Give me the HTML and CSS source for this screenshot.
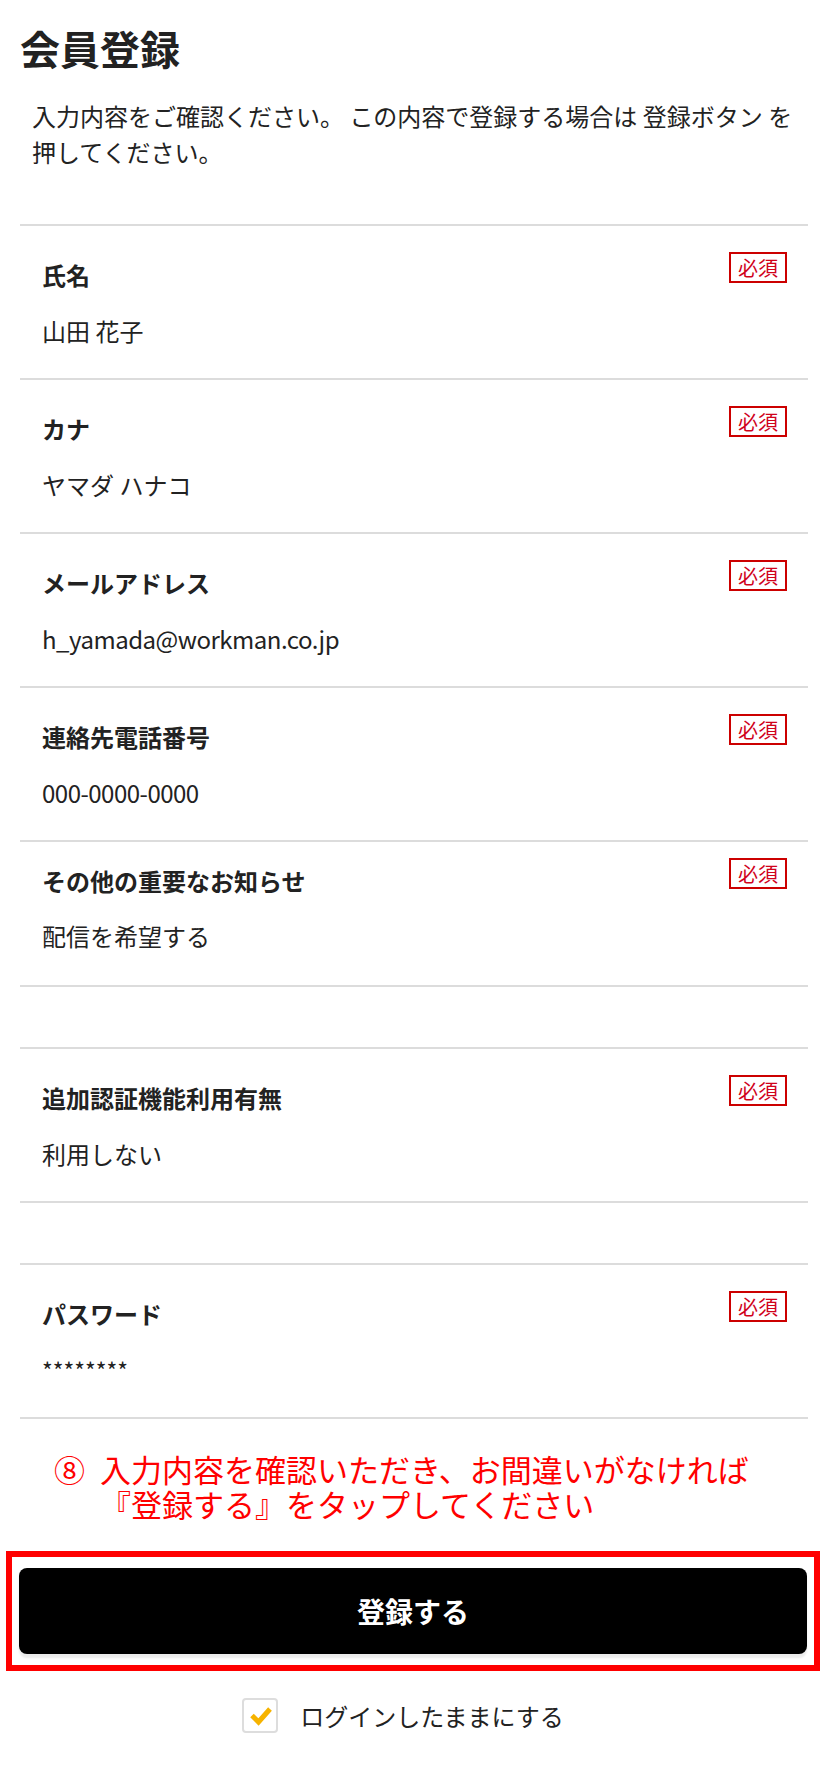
FILE: index.html
```html
<!DOCTYPE html>
<html lang="ja">
<head>
<meta charset="utf-8">
<title>会員登録</title>
<link rel="stylesheet" href="styles.css">
</head>
<body>
<main class="page">
  <h1 class="title">会員登録</h1>
  <p class="lead">入力内容をご確認ください。 この内容で登録する場合は 登録ボタン を<br>押してください。</p>

  <div class="confirm-list">
    <div class="field">
      <div class="field-head"><span class="field-label">氏名</span><span class="badge">必須</span></div>
      <div class="field-value">山田 花子</div>
    </div>
    <div class="field">
      <div class="field-head"><span class="field-label">カナ</span><span class="badge">必須</span></div>
      <div class="field-value">ヤマダ ハナコ</div>
    </div>
    <div class="field">
      <div class="field-head"><span class="field-label">メールアドレス</span><span class="badge">必須</span></div>
      <div class="field-value field-value--latin">h_yamada@workman.co.jp</div>
    </div>
    <div class="field">
      <div class="field-head"><span class="field-label">連絡先電話番号</span><span class="badge">必須</span></div>
      <div class="field-value field-value--latin">000-0000-0000</div>
    </div>
    <div class="field field--compact">
      <div class="field-head"><span class="field-label">その他の重要なお知らせ</span><span class="badge">必須</span></div>
      <div class="field-value">配信を希望する</div>
    </div>
    <div class="field-spacer"></div>
    <div class="field">
      <div class="field-head"><span class="field-label">追加認証機能利用有無</span><span class="badge">必須</span></div>
      <div class="field-value">利用しない</div>
    </div>
    <div class="field-spacer"></div>
    <div class="field">
      <div class="field-head"><span class="field-label">パスワード</span><span class="badge">必須</span></div>
      <div class="field-value field-value--secret">********</div>
    </div>
  </div>

  <div class="note">
    <span class="note-num">⑧</span>
    <span class="note-text">入力内容を確認いただき、お間違いがなければ<br>『登録する』をタップしてください</span>
  </div>

  <div class="highlight">
    <button class="submit" type="button">登録する</button>
  </div>

  <label class="keep-login">
    <span class="check-box">
      <svg width="36" height="35" viewBox="0 0 36 35" aria-hidden="true">
        <polyline points="10,17.5 16.5,24 28,11" fill="none" stroke="#f6b300" stroke-width="5" stroke-linecap="butt" stroke-linejoin="miter"/>
      </svg>
    </span>
    <span class="keep-text">ログインしたままにする</span>
  </label>
</main>
</body>
</html>
```

FILE: styles.css
```css
html, body {
  margin: 0;
  padding: 0;
  background: #fff;
}

body {
  font-family: "Noto Sans CJK JP", "Noto Sans", sans-serif;
  color: #222;
  width: 828px;
}

.page {
  padding: 0 20px;
}

.title {
  margin: 0;
  padding-top: 24px;
  font-size: 40px;
  line-height: 48px;
  font-weight: 700;
  color: #222;
}

.lead {
  margin: 26px 0 0;
  padding-left: 12px;
  font-size: 24px;
  line-height: 36px;
  color: #222;
  white-space: nowrap;
}

.confirm-list {
  margin-top: 54px;
  border-bottom: 2px solid #dcdcdc;
}

.field {
  border-top: 2px solid #dcdcdc;
  padding: 32px 21px 30px 22px;
}

.field--compact {
  padding-top: 22px;
  padding-bottom: 32px;
}

.field-head {
  display: flex;
  justify-content: space-between;
  align-items: flex-start;
}

.field-label {
  font-size: 24px;
  line-height: 34px;
  font-weight: 700;
  color: #222;
}

.badge {
  margin-top: -6px;
  border: 2px solid #cc0000;
  color: #d0021b;
  font-size: 20px;
  line-height: 27px;
  padding: 0 7px;
}

.field-value {
  margin-top: 22px;
  font-size: 24px;
  line-height: 34px;
  color: #222;
}

.field--compact .field-value {
  margin-top: 21px;
}

.field-value--latin {
  letter-spacing: -0.5px;
}

.field-value--secret {
  font-size: 23px;
}

.field-spacer {
  border-top: 2px solid #dcdcdc;
  height: 60px;
}

.note {
  display: flex;
  margin-top: 35px;
  padding-left: 34px;
  color: #ff0000;
  font-family: "Liberation Sans", "Noto Sans CJK JP", sans-serif;
  font-size: 31px;
  line-height: 35px;
}

.note-num {
  flex: 0 0 46px;
}

.note-text {
  white-space: nowrap;
}

.highlight {
  margin: 27px -12px 0 -14px;
  border: 6px solid #ff0000;
  padding: 11px 7px;
}

.submit {
  display: block;
  width: 100%;
  height: 86px;
  border: 0;
  border-radius: 8px;
  background: #000;
  color: #fff;
  font-family: "Noto Sans CJK JP", "Noto Sans", sans-serif;
  font-size: 28px;
  font-weight: 700;
  box-shadow: 0 4px 2px rgba(0, 0, 0, 0.08);
  cursor: pointer;
}

.keep-login {
  display: flex;
  justify-content: center;
  align-items: center;
  gap: 22px;
  margin-top: 27px;
  padding-right: 22px;
}

.check-box {
  display: block;
  width: 36px;
  height: 35px;
  box-sizing: border-box;
  border: 2px solid #dddddd;
  border-radius: 4px;
  position: relative;
}

.check-box svg {
  position: absolute;
  left: -2px;
  top: -2px;
}

.keep-text {
  font-size: 24px;
  line-height: 34px;
  color: #222;
}
```
